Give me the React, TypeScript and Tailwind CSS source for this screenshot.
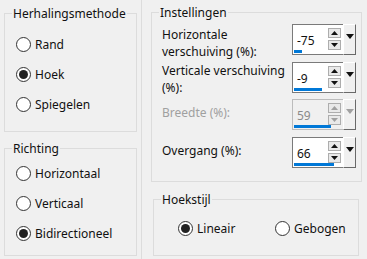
import React from "react";

function Radio({ checked, label }: { checked?: boolean; label: string }) {
  return (
    <div className="flex items-center h-[30px]">
      <div className="w-[15px] h-[15px] rounded-full border border-[#333333] bg-white flex items-center justify-center shrink-0">
        {checked && <div className="w-[9px] h-[9px] rounded-full bg-[#222222]" />}
      </div>
      <span className="ml-[4px] text-[12px] leading-[17px] text-[#111111]">{label}</span>
    </div>
  );
}

function Group({
  title,
  className,
  children,
}: {
  title: string;
  className: string;
  children?: React.ReactNode;
}) {
  return (
    <div className={"relative border border-[#dcdcdc] " + className}>
      <span className="absolute top-[-9px] left-[7px] px-[1px] bg-[#f0f0f0] text-[12px] leading-[17px] text-[#111111]">
        {title}
      </span>
      {children}
    </div>
  );
}

function Spin({ value, pct, disabled }: { value: string; pct: number; disabled?: boolean }) {
  const arrow = disabled ? "#a0a0a0" : "#111111";
  return (
    <div
      className={
        "relative w-[64px] h-[31px] border flex " +
        (disabled ? "border-[#bcbcbc] bg-[#f0f0f0]" : "border-[#7a7a7a] bg-white")
      }
    >
      <div
        className={
          "flex-1 flex items-center pl-[4px] pt-[2px] text-[12px] " +
          (disabled ? "text-[#8a8a8a]" : "text-[#111111]")
        }
      >
        {value}
      </div>
      <div className="w-[15px] flex flex-col pt-[3px] gap-[2px]">
        <div className="w-[13px] h-[10px] border border-[#adadad] bg-[#e9e9e9] flex items-center justify-center">
          <svg width="7" height="4" viewBox="0 0 7 4">
            <polygon points="0,4 7,4 3.5,0" fill={arrow} />
          </svg>
        </div>
        <div className="w-[13px] h-[10px] border border-[#adadad] bg-[#e9e9e9] flex items-center justify-center">
          <svg width="7" height="4" viewBox="0 0 7 4">
            <polygon points="0,0 7,0 3.5,4" fill={arrow} />
          </svg>
        </div>
      </div>
      <div className="w-[13px] mt-[-1px] mb-[-1px] mr-[-1px] bg-[#f0f0f0] border-t border-l border-t-white border-l-white border-r border-b border-r-[#696969] border-b-[#696969] flex justify-center pt-[9px]">
        <svg width="8" height="5" viewBox="0 0 8 5">
          <polygon points="0,0 8,0 4,5" fill={arrow} />
        </svg>
      </div>
      <div
        className="absolute left-[1px] bottom-[1px] h-[3px] bg-[#0078d7]"
        style={{ width: `${pct}px` }}
      />
    </div>
  );
}

export default function App() {
  return (
    <div className="w-[367px] h-[259px] bg-[#f0f0f0] flex font-['Noto_Sans',sans-serif] overflow-hidden">
      <div className="ml-[4px] w-[133px] flex flex-col">
        <Group title="Herhalingsmethode" className="mt-[13px] h-[119px] pt-[15px] pl-[11px]">
          <Radio label="Rand" />
          <Radio checked label="Hoek" />
          <Radio label="Spiegelen" />
        </Group>
        <Group title="Richting" className="mt-[16px] h-[108px] pt-[9px] pl-[11px]">
          <Radio label="Horizontaal" />
          <Radio label="Verticaal" />
          <Radio checked label="Bidirectioneel" />
        </Group>
      </div>
      <div className="ml-[4px] w-[1px] bg-[#dcdcdc]" />
      <div className="flex flex-col">
        <Group title="Instellingen" className="ml-[9px] mt-[12px] w-[211px] h-[170px] pl-[10px] pt-[11px]">
          <div className="flex h-[38px]">
            <div className="w-[130px] mt-[2px] text-[12px] leading-[17px] text-[#111111]">
              Horizontale
              <br />
              verschuiving (%):
            </div>
            <Spin value="-75" pct={8} />
          </div>
          <div className="flex h-[37px]">
            <div className="w-[130px] mt-[0px] text-[12px] leading-[17px] text-[#111111] whitespace-nowrap">
              Verticale verschuiving
              <br />
              (%):
            </div>
            <Spin value="-9" pct={28} />
          </div>
          <div className="flex h-[38px]">
            <div className="w-[130px] mt-[5px] text-[12px] leading-[17px] text-[#a0a0a0]">
              Breedte (%):
            </div>
            <Spin value="59" pct={37} disabled />
          </div>
          <div className="flex h-[38px]">
            <div className="w-[130px] mt-[5px] text-[12px] leading-[17px] text-[#111111]">
              Overgang (%):
            </div>
            <Spin value="66" pct={40} />
          </div>
        </Group>
        <Group title="Hoekstijl" className="ml-[11px] mt-[17px] w-[206px] h-[57px] flex items-center pl-[24px] pt-[1px]">
          <div className="w-[97px]">
            <Radio checked label="Lineair" />
          </div>
          <Radio label="Gebogen" />
        </Group>
      </div>
    </div>
  );
}
